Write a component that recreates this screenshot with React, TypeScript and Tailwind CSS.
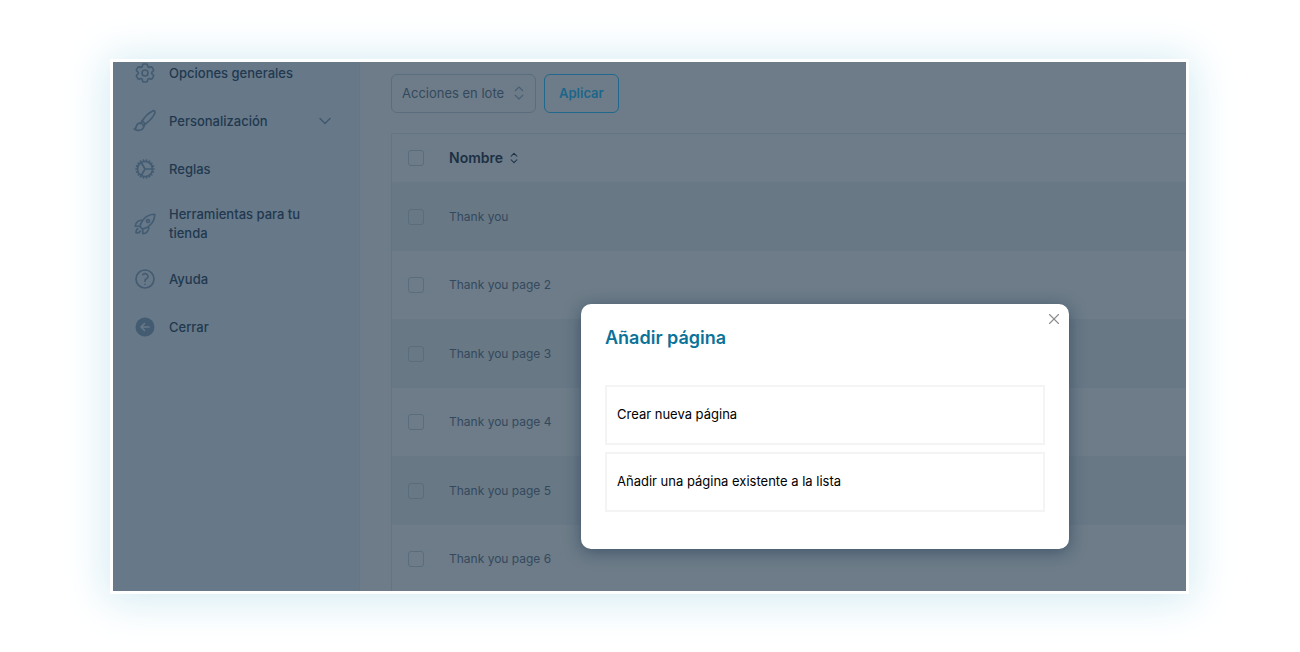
import { useState } from 'react';
import type { ReactNode } from 'react';
import { ChevronDown, ChevronsUpDown, X } from 'lucide-react';
import {
  HiOutlineCog,
  HiOutlineCog6Tooth,
  HiOutlineQuestionMarkCircle,
  HiOutlineRocketLaunch,
} from 'react-icons/hi2';

function BrushIcon() {
  return (
    <svg
      viewBox="0 0 24 24"
      className="h-6 w-6"
      fill="none"
      stroke="currentColor"
      strokeWidth={1.7}
      strokeLinecap="round"
      strokeLinejoin="round"
    >
      <path d="M9 12.2C11.4 8.2 15.9 3.7 19.8 1.9c1.4-.6 2.7.7 2.1 2.1-1.6 3.9-6 8.5-9.9 11.2" />
      <path d="M9 12.2 7.7 14.3c1.6.4 2.5 1.3 3 2.8l1.3-1.9c-.5-1.5-1.5-2.5-3-3Z" />
      <path d="M7.7 14.3c-2.1-.5-3.9.7-4.2 2.7-.2 1.4-.8 2.5-2.2 3 2.8 1.9 6.7 1.8 8.4-.2.9-1 1.2-1.7 1-2.7" />
    </svg>
  );
}

function BackIcon() {
  return (
    <svg viewBox="0 0 20 20" className="h-5 w-5" fill="none">
      <circle cx="10" cy="10" r="9.5" fill="#435c72" />
      <path
        d="M14 10H6.5M9.5 6.5 6 10l3.5 3.5"
        stroke="#677888"
        strokeWidth={1.6}
        strokeLinecap="round"
        strokeLinejoin="round"
      />
    </svg>
  );
}

type MenuItem = {
  label: string;
  icon: ReactNode;
  expandable?: boolean;
};

const menuItems: MenuItem[] = [
  { label: 'Opciones generales', icon: <HiOutlineCog6Tooth size={24} strokeWidth={1.7} /> },
  { label: 'Personalización', icon: <BrushIcon />, expandable: true },
  { label: 'Reglas', icon: <HiOutlineCog size={24} strokeWidth={1.7} /> },
  { label: 'Herramientas para tu tienda', icon: <HiOutlineRocketLaunch size={24} strokeWidth={1.7} /> },
  { label: 'Ayuda', icon: <HiOutlineQuestionMarkCircle size={24} strokeWidth={1.7} /> },
  { label: 'Cerrar', icon: <BackIcon /> },
];

const pages = [
  'Thank you',
  'Thank you page 2',
  'Thank you page 3',
  'Thank you page 4',
  'Thank you page 5',
  'Thank you page 6',
];

const checkboxClass =
  'block h-4 w-4 appearance-none rounded-[3px] border border-[#5a6d7d] checked:bg-[#1f6c90]';

function Sidebar() {
  return (
    <nav className="w-[247px] shrink-0 border-r border-[#657684] bg-[#677888]">
      <ul className="-mt-[13px]">
        {menuItems.map(item => (
          <li key={item.label}>
            <a
              href="#"
              className="flex min-h-12 items-center gap-2 py-3 pr-6 pl-[18px] text-[13px] leading-[19px] font-medium text-[#21384f]"
            >
              <span className="flex w-7 shrink-0 justify-center text-[#435c72]">{item.icon}</span>
              <span className="w-[140px] pl-[2px]">{item.label}</span>
              {item.expandable && (
                <ChevronDown size={20} strokeWidth={1.75} className="-my-1 ml-auto text-[#405970]" />
              )}
            </a>
          </li>
        ))}
      </ul>
    </nav>
  );
}

function PagesTable() {
  const [selected, setSelected] = useState<string[]>([]);

  const toggle = (page: string) => {
    setSelected(prev => (prev.includes(page) ? prev.filter(p => p !== page) : [...prev, page]));
  };

  return (
    <table className="mt-5 w-full border-separate border-spacing-0 border-t border-l border-[#637482] text-left">
      <thead>
        <tr className="h-12">
          <th className="w-[57px] pl-4">
            <input
              type="checkbox"
              aria-label="Seleccionar todo"
              className={checkboxClass}
              checked={selected.length === pages.length}
              onChange={e => setSelected(e.target.checked ? pages : [])}
            />
          </th>
          <th>
            <button className="flex items-center gap-1 text-sm font-semibold text-[#1c3044]">
              Nombre
              <ChevronsUpDown size={14} strokeWidth={1.75} />
            </button>
          </th>
        </tr>
      </thead>
      <tbody>
        {pages.map((page, index) => (
          <tr key={page} className="odd:h-[69px] odd:bg-[#687885] even:h-[68px]">
            <td className="pl-4">
              <input
                type="checkbox"
                id={`page-${index}`}
                className={checkboxClass}
                checked={selected.includes(page)}
                onChange={() => toggle(page)}
              />
            </td>
            <td className="text-xs text-[#34495d]">
              <label htmlFor={`page-${index}`}>{page}</label>
            </td>
          </tr>
        ))}
      </tbody>
    </table>
  );
}

function AddPageModal({ onClose }: { onClose: () => void }) {
  return (
    <div
      role="dialog"
      aria-labelledby="modal-title"
      className="absolute top-[242px] right-[117px] w-[488px] rounded-[10px] bg-white px-6 pt-[19px] pb-[37px] shadow-[0_3px_16px_rgba(20,45,75,0.5)]"
    >
      <button
        aria-label="Cerrar ventana"
        onClick={onClose}
        className="absolute top-[6px] right-[6px] text-[#8c8c8c]"
      >
        <X size={18} strokeWidth={1.5} />
      </button>
      <h2 id="modal-title" className="text-lg leading-[30px] font-semibold text-[#0b7299]">
        Añadir página
      </h2>
      <div className="mt-8 flex flex-col gap-[7px]">
        <button className="h-[60px] border-2 border-[#f4f4f4] px-[10px] text-left text-[13px] text-black">
          Crear nueva página
        </button>
        <button className="h-[60px] border-2 border-[#f4f4f4] px-[10px] text-left text-[13px] text-black">
          Añadir una página existente a la lista
        </button>
      </div>
    </div>
  );
}

export default function App() {
  const [isModalOpen, setIsModalOpen] = useState(true);

  return (
    <div className="h-screen bg-white pt-[62px] pr-[114px] pb-[61px] pl-[113px] font-['Inter',sans-serif]">
      <div className="relative h-full shadow-[0_0_0_3px_#fff,0_3px_40px_7px_#d3ebf3]">
        <div className="flex h-full overflow-hidden bg-[#6d7c88]">
          <Sidebar />
          <main className="min-w-0 flex-1 pt-3 pl-[31px]">
            <div className="flex gap-2">
              <div className="relative">
                <select
                  aria-label="Acciones en lote"
                  className="h-[39px] w-[145px] appearance-none rounded-md border border-[#5a6d7d] pl-[10px] text-[13px] text-[#34495d]"
                >
                  <option>Acciones en lote</option>
                </select>
                <ChevronsUpDown
                  size={18}
                  strokeWidth={1.5}
                  className="pointer-events-none absolute top-[10px] right-2 text-[#4a5f73]"
                />
              </div>
              <button className="h-[39px] rounded-md border border-[#20698c] px-[14px] text-[13px] font-semibold text-[#1b668a]">
                Aplicar
              </button>
            </div>
            <PagesTable />
          </main>
        </div>
        {isModalOpen && <AddPageModal onClose={() => setIsModalOpen(false)} />}
      </div>
    </div>
  );
}
